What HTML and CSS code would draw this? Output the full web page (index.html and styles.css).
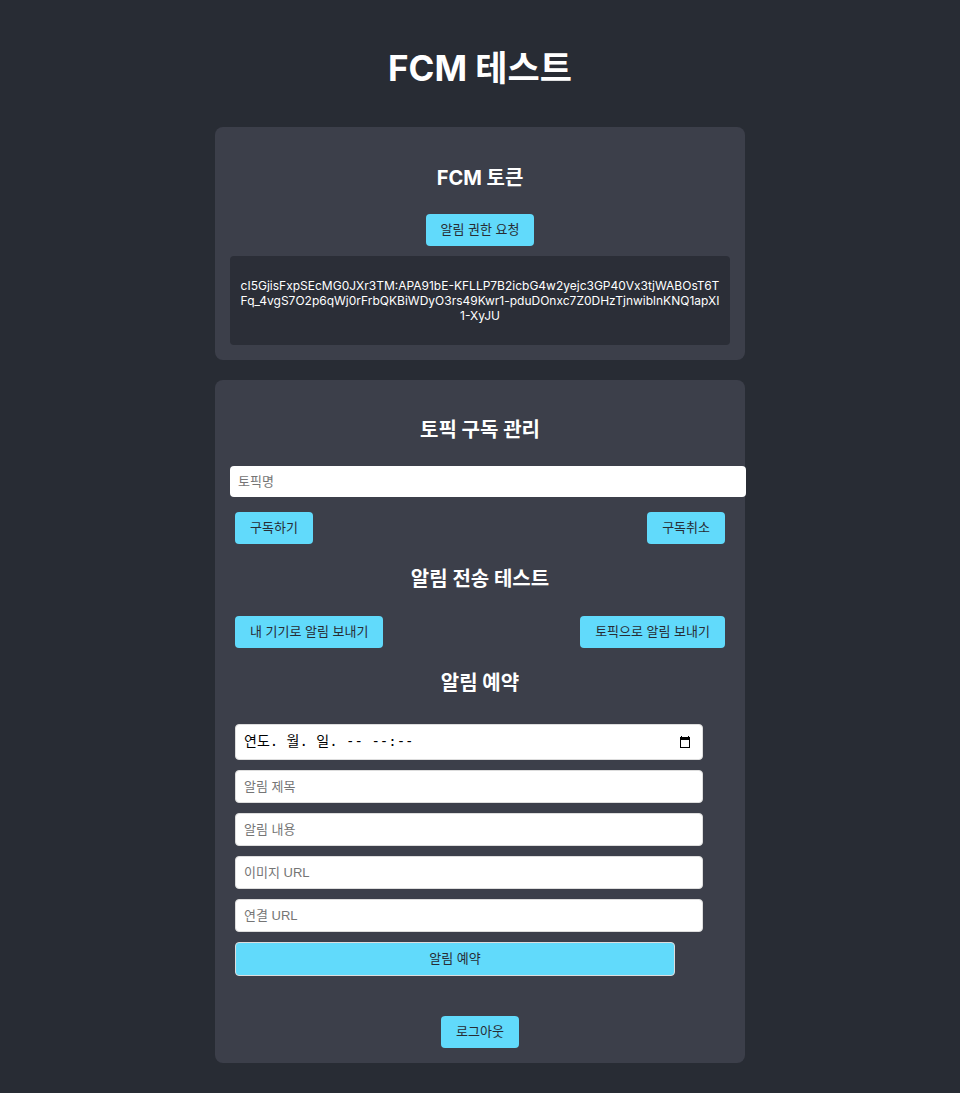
FILE: index.html
```html
<!DOCTYPE html>
<html lang="ko">
<head>
<meta charset="utf-8">
<meta name="viewport" content="width=device-width, initial-scale=1">
<title>FCM 테스트</title>
<link rel="stylesheet" href="styles.css">
</head>
<body>
<main class="app">
  <h1 class="app-title">FCM 테스트</h1>

  <section class="card">
    <h2 class="card-title">FCM 토큰</h2>
    <button class="button" type="button">알림 권한 요청</button>
    <div class="token">
      <p class="token-text">cI5GjisFxpSEcMG0JXr3TM:APA91bE-KFLLP7B2icbG4w2yejc3GP40Vx3tjWABOsT6TFq_4vgS7O2p6qWj0rFrbQKBiWDyO3rs49Kwr1-pduDOnxc7Z0DHzTjnwiblnKNQ1apXI1-XyJU</p>
    </div>
  </section>

  <section class="card topic-card">
    <h2 class="card-title">토픽 구독 관리</h2>
    <input class="topic-input" type="text" placeholder="토픽명" aria-label="토픽명">
    <div class="button-row">
      <button class="button" type="button">구독하기</button>
      <button class="button" type="button">구독취소</button>
    </div>

    <h2 class="section-title">알림 전송 테스트</h2>
    <div class="button-row">
      <button class="button" type="button">내 기기로 알림 보내기</button>
      <button class="button" type="button">토픽으로 알림 보내기</button>
    </div>

    <h2 class="section-title">알림 예약</h2>
    <form class="schedule">
      <div class="date-field">
        <input class="date-input" type="text" placeholder="연도. 월. 일. -- --:--" aria-label="예약 시간">
        <button class="date-button" type="button" aria-label="달력 열기">
          <svg width="12" height="12" viewBox="0 0 12 12" aria-hidden="true"><path d="M2 0h1v1h6V0h1v1h1v11H1V1h1zM2 4v7h8V4z" fill="#000" fill-rule="evenodd"/></svg>
        </button>
      </div>
      <input class="field" type="text" placeholder="알림 제목" aria-label="알림 제목">
      <input class="field" type="text" placeholder="알림 내용" aria-label="알림 내용">
      <input class="field" type="text" placeholder="이미지 URL" aria-label="이미지 URL">
      <input class="field" type="text" placeholder="연결 URL" aria-label="연결 URL">
      <button class="button submit" type="button">알림 예약</button>
    </form>

    <button class="button" type="button">로그아웃</button>
  </section>
</main>
</body>
</html>
```
FILE: styles.css
```css
* {
  box-sizing: border-box;
}

body {
  margin: 0;
  background: #282c34;
  color: #fff;
  font-family: Inter, "Noto Sans CJK KR", sans-serif;
}

.app {
  max-width: 570px;
  margin: 0 auto;
  padding: 44px 20px 30px;
  text-align: center;
}

.app-title {
  margin: 0 0 35px;
  font-size: 35px;
  line-height: 48px;
  font-weight: 700;
}

.card {
  margin-bottom: 20px;
  padding: 36px 15px 15px;
  border-radius: 8px;
  background: #3c3f4a;
}

.topic-card {
  margin-bottom: 0;
  padding-top: 35px;
}

.card-title,
.section-title {
  margin: 0 0 21px;
  font-size: 20px;
  line-height: 30px;
  font-weight: 700;
}

.section-title {
  margin: 20px 0 22px;
}

.button {
  height: 32px;
  padding: 0 15px 4px;
  border: 0;
  border-radius: 4px;
  background: #61dafb;
  color: #282c34;
  font-family: "Liberation Sans", "Noto Sans CJK KR", sans-serif;
  font-size: 13px;
  cursor: pointer;
}

.token {
  margin-top: 10px;
  padding: 22px 10px;
  border-radius: 4px;
  background: #2b2e37;
}

.token-text {
  margin: 0;
  font-size: 12px;
  line-height: 15px;
  overflow-wrap: anywhere;
  word-break: break-all;
}

.topic-input,
.field,
.date-input {
  display: block;
  padding: 0 8px;
  border: 0;
  border-radius: 4px;
  background: #fff;
  color: #000;
  font-family: "Liberation Sans", "Noto Sans CJK KR", sans-serif;
  font-size: 13px;
}

.topic-input::placeholder,
.field::placeholder {
  color: #757575;
}

.topic-input {
  width: calc(100% + 16px);
  height: 31px;
}

.button-row {
  display: flex;
  justify-content: space-between;
  padding: 0 5px;
}

.topic-input + .button-row {
  margin-top: 15px;
}

.schedule {
  display: grid;
  gap: 10px;
  padding: 4px 27px 40px 5px;
}

.field,
.date-input,
.submit {
  border: 1px solid #ddd;
}

.field {
  width: 100%;
  height: 33px;
}

.date-field {
  position: relative;
}

.date-input {
  width: 100%;
  height: 36px;
  padding: 0 40px 2px 8px;
  font-family: "DejaVu Sans Mono", "Noto Sans CJK KR", monospace;
  font-size: 14px;
}

.date-input::placeholder {
  color: #000;
}

.date-button {
  position: absolute;
  top: 0;
  right: 8px;
  width: 20px;
  height: 36px;
  padding: 0;
  border: 0;
  background: none;
  line-height: 0;
}

.submit {
  height: 34px;
  margin-right: 28px;
}
```
